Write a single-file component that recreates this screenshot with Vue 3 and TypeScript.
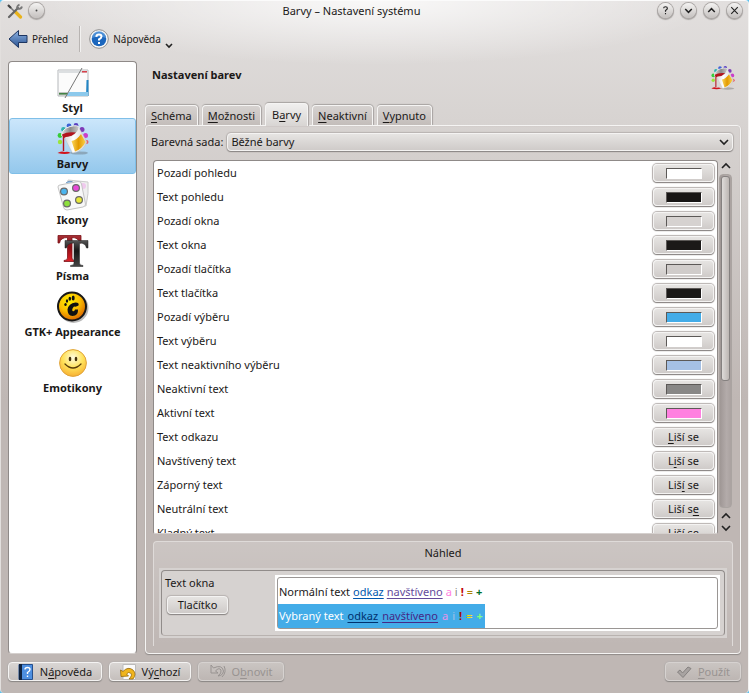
<script setup lang="ts">
import { ref } from 'vue'

interface Accel {
  label: string
  key: number
}

interface ColorRow {
  label: string
  color?: string
  key?: number
}

const modules = ['Styl', 'Barvy', 'Ikony', 'Písma', 'GTK+ Appearance', 'Emotikony']
const activeModule = ref('Barvy')

const tabs: Accel[] = [
  { label: 'Schéma', key: 0 },
  { label: 'Možnosti', key: 0 },
  { label: 'Barvy', key: 1 },
  { label: 'Neaktivní', key: 0 },
  { label: 'Vypnuto', key: 0 },
]
const activeTab = ref('Barvy')

const colorSet = ref('Běžné barvy')

const rows: ColorRow[] = [
  { label: 'Pozadí pohledu', color: '#ffffff' },
  { label: 'Text pohledu', color: '#181615' },
  { label: 'Pozadí okna', color: '#d6d2d0' },
  { label: 'Text okna', color: '#1b1918' },
  { label: 'Pozadí tlačítka', color: '#d0ccca' },
  { label: 'Text tlačítka', color: '#1b1918' },
  { label: 'Pozadí výběru', color: '#43ace8' },
  { label: 'Text výběru', color: '#ffffff' },
  { label: 'Text neaktivního výběru', color: '#a5c0e4' },
  { label: 'Neaktivní text', color: '#888786' },
  { label: 'Aktivní text', color: '#ff80e0' },
  { label: 'Text odkazu', key: 0 },
  { label: 'Navštívený text', key: 1 },
  { label: 'Záporný text', key: 3 },
  { label: 'Neutrální text', key: 6 },
  { label: 'Kladný text', key: 2 },
]
const varies = 'Liší se'

const samples = [
  { text: 'Normální text', kind: 'normal' },
  { text: 'Vybraný text', kind: 'chosen' },
]
</script>

<template>
  <div class="window">
    <svg class="defs" aria-hidden="true">
      <defs>
        <linearGradient id="metal" x1="0" x2="1">
          <stop offset="0" stop-color="#d4d4d4" />
          <stop offset="0.4" stop-color="#ffffff" />
          <stop offset="1" stop-color="#d0d0d0" />
        </linearGradient>
        <linearGradient id="rim" x1="0" x2="1">
          <stop offset="0" stop-color="#dddddd" />
          <stop offset="0.5" stop-color="#8a8a8a" />
          <stop offset="1" stop-color="#cccccc" />
        </linearGradient>
        <linearGradient id="gold" x1="0" x2="1">
          <stop offset="0" stop-color="#fbd75c" />
          <stop offset="0.5" stop-color="#e39a00" />
          <stop offset="1" stop-color="#fbd04a" />
        </linearGradient>
        <linearGradient id="blue" x1="0" y1="0" x2="0" y2="1">
          <stop offset="0" stop-color="#8fb4e4" />
          <stop offset="1" stop-color="#27508f" />
        </linearGradient>
        <linearGradient id="redT" x1="0" y1="0" x2="0" y2="1">
          <stop offset="0" stop-color="#a83036" />
          <stop offset="0.45" stop-color="#8a0c14" />
          <stop offset="1" stop-color="#e02028" />
        </linearGradient>
        <linearGradient id="darkT" x1="0" y1="0" x2="0" y2="1">
          <stop offset="0" stop-color="#555555" />
          <stop offset="0.4" stop-color="#161616" />
          <stop offset="1" stop-color="#444444" />
        </linearGradient>
        <radialGradient id="gtk" cx="0.4" cy="0.3" r="0.75">
          <stop offset="0" stop-color="#fff100" />
          <stop offset="0.5" stop-color="#fbc000" />
          <stop offset="1" stop-color="#d65a00" />
        </radialGradient>
        <radialGradient id="smile" cx="0.5" cy="0.3" r="0.75">
          <stop offset="0" stop-color="#fffbe0" />
          <stop offset="0.5" stop-color="#ffe25a" />
          <stop offset="1" stop-color="#f6a92c" />
        </radialGradient>
        <symbol id="paint" viewBox="0 0 32 32">
          <circle cx="3" cy="19" r="2.2" fill="#9be53a" />
          <circle cx="3" cy="12.5" r="2.4" fill="#35cc38" />
          <circle cx="6.5" cy="6.5" r="2.4" fill="#32b2ae" />
          <circle cx="12" cy="2.8" r="2.4" fill="#3d62d6" />
          <circle cx="19" cy="2.5" r="2.4" fill="#5940c0" />
          <circle cx="25" cy="6.5" r="2.5" fill="#7e3ab8" />
          <circle cx="28.5" cy="12.5" r="2.5" fill="#cb3fc9" />
          <circle cx="29.5" cy="19" r="2" fill="#ec5562" />
          <ellipse cx="22" cy="30" rx="9" ry="1.6" fill="#555" opacity="0.35" />
          <path d="M7 14 L21.500 4 L30 19 Q27 28 15.500 30 Z" fill="url(#metal)" stroke="#c0c0c0" stroke-width="0.5" />
          <path d="M14.500 18 Q20 17 24 11 L28.500 19 Q25 26 18 28.500 Z" fill="url(#gold)" />
          <path d="M4.500 12.500 Q5 6 13 3.500 Q21 1.500 22 4.500 Q22 9 14.500 13 Q6 16 4.500 12.500 Z" fill="url(#rim)" stroke="#f0f0f0" stroke-width="1" />
          <path d="M5 11.500 Q10 8.500 19 9.500 Q15 13.500 9 14 L7.200 15 V28 H5.800 V14 Z" fill="#b3141d" />
          <path d="M0.500 30 Q4 27.500 8 29 Q11 28 13.500 30 Q8 32 0.500 30 Z" fill="#d1141c" />
        </symbol>
      </defs>
    </svg>

    <header class="titlebar">
      <svg class="tools" viewBox="0 0 16 16" aria-hidden="true">
        <path d="M2 3 L13 14" stroke="#777" stroke-width="1.5" />
        <path d="M8.500 9 L13.500 14" stroke="#e9b31c" stroke-width="3.2" stroke-linecap="round" />
        <path d="M2 14 L11 5" stroke="#666" stroke-width="2.2" stroke-linecap="round" />
        <path d="M10 6 Q9.500 3 12.500 1.500 M11 6 Q14.500 6 15 3.500" stroke="#777" stroke-width="1.7" fill="none" />
        <path d="M1 2 L4 5" stroke="#444" stroke-width="2.2" />
      </svg>
      <button class="orb" aria-label="Na všech plochách">
        <svg viewBox="0 0 16 16"><circle cx="8" cy="8" r="1" fill="#444" /></svg>
      </button>
      <h1>Barvy – Nastavení systému</h1>
      <div class="orbs">
        <button class="orb" aria-label="Nápověda okna">
          <svg viewBox="0 0 16 16"><path class="thin" d="M6 5.500 Q6 4 8 4 Q10 4 10 5.700 Q10 7 8 8 V9.300 M8 10.700 V12" /></svg>
        </button>
        <button class="orb" aria-label="Minimalizovat">
          <svg viewBox="0 0 16 16"><path d="M4.500 6.500 L8 10 L11.500 6.500" /></svg>
        </button>
        <button class="orb" aria-label="Maximalizovat">
          <svg viewBox="0 0 16 16"><path d="M4.500 9.500 L8 6 L11.500 9.500" /></svg>
        </button>
        <button class="orb" aria-label="Zavřít">
          <svg viewBox="0 0 16 16"><path class="thin" d="M4.500 4.500 L11.500 11.500 M11.500 4.500 L4.500 11.500" /></svg>
        </button>
      </div>
    </header>

    <div class="toolbar">
      <button class="tool">
        <svg class="i20" viewBox="0 0 20 20" aria-hidden="true">
          <path d="M1 10 L10.500 1.500 V6.500 H19 V13.500 H10.500 V18.500 Z" fill="url(#blue)" stroke="#1d3561" stroke-linejoin="round" />
        </svg>
        Přehled
      </button>
      <span class="separator"></span>
      <button class="tool">
        <svg class="i20" viewBox="0 0 20 20" aria-hidden="true">
          <circle cx="10" cy="10" r="9.3" fill="#f8f8f8" stroke="#777" stroke-width="0.8" />
          <circle cx="10" cy="10" r="7.3" fill="#1b66bd" />
          <path d="M3 9 A7 7 0 0 1 17 9 Q10 6 3 9Z" fill="#6ba9e6" opacity="0.6" />
          <path d="M7.300 7.800 Q7.500 5.500 10 5.500 Q12.500 5.500 12.500 7.600 Q12.500 9 10 10.400 V11.600 M10 13 V15" fill="none" stroke="#fff" stroke-width="2" />
        </svg>
        Nápověda
        <svg class="drop" viewBox="0 0 8 6" aria-hidden="true"><path d="M1 1 L4 4 L7 1" /></svg>
      </button>
    </div>

    <main class="body">
      <nav class="sidebar">
        <button
          v-for="(name, i) in modules"
          :key="name"
          class="module"
          :class="{ active: name === activeModule }"
          @click="activeModule = name"
        >
          <svg v-if="i === 0" class="i32" viewBox="0 0 32 32" aria-hidden="true">
            <path d="M1 3 H31 V29 H1 Z" fill="#fbfbfb" stroke="#b5b8bb" />
            <path d="M1.500 3.500 H30.500 V6 H1.500 Z" fill="#dcdfe1" />
            <path d="M25 4 H30 V5.500 H25 Z" fill="#d8414b" />
            <path d="M29.500 13 H31.500 V29 H29 Z" fill="#2385c4" />
            <path d="M12 25 H31 V29 H9 Z" fill="#8cc9ec" />
            <path d="M2 25 H11 L9 28.500 H2 Z" fill="#c0c3c0" />
            <path d="M2 26 H10.500 V27.500 H2 Z" fill="#438345" />
            <path d="M25 1 L8 31" stroke="#777" />
          </svg>
          <svg v-else-if="i === 1" class="i32" aria-hidden="true"><use href="#paint" /></svg>
          <svg v-else-if="i === 2" class="i32" viewBox="0 0 32 32" aria-hidden="true">
            <path d="M11 1 L31 3 Q32 14 29 27 L9 25 Z" fill="#efefef" stroke="#ccc" />
            <path d="M9 4 Q13 0.500 17 4" fill="#9bc8ee" stroke="#7098c0" />
            <circle cx="26" cy="7" r="3" fill="#f0c9ee" />
            <path d="M1 8 Q1 6 3 6 L21 2.500 Q24 2 24.500 5 L28.500 25 Q29 27 26 28 L10 31 Q7 31 6.500 28 Z" fill="#f8f8f8" stroke="#c4c4c4" />
            <g stroke="#696969" stroke-width="1.2">
              <circle cx="7" cy="12.5" r="3.4" fill="#4cb5ef" />
              <circle cx="19" cy="9" r="3.4" fill="#e748d8" />
              <circle cx="10" cy="24.5" r="3.4" fill="#8de03c" />
              <circle cx="22" cy="21" r="3.4" fill="#e7e83a" />
            </g>
          </svg>
          <svg v-else-if="i === 3" class="i32" viewBox="0 0 32 32" aria-hidden="true">
            <path d="M1 0.500 H24 V8 H22.500 Q21.500 2.500 15 2.500 V23 Q15 25.500 18 25.500 V26.500 H7 V25.500 Q10.500 25.500 10.500 23 V2.500 Q3.500 2.500 2.500 8 H1 Z" fill="url(#redT)" stroke="#7c1218" stroke-width="0.8" />
            <path d="M8 5.500 H31 V13 H29.500 Q28.500 8 22.500 8 V28 Q22.500 30.500 26 30.500 V31.500 H13.500 V30.500 Q17 30.500 17 28 V8 Q10.500 8 9.500 13 H8 Z" fill="url(#darkT)" stroke="#222" stroke-width="0.5" />
          </svg>
          <svg v-else-if="i === 4" class="i32" viewBox="0 0 32 32" aria-hidden="true">
            <circle cx="16.5" cy="17" r="15" fill="#777" opacity="0.5" />
            <circle cx="15" cy="15.5" r="14" fill="url(#gtk)" stroke="#181818" stroke-width="2" />
            <ellipse cx="8.5" cy="13.5" rx="1.2" ry="1.6" fill="#111" />
            <ellipse cx="10" cy="10" rx="1.2" ry="1.8" fill="#111" />
            <ellipse cx="12.8" cy="7.8" rx="1.3" ry="2" fill="#111" />
            <ellipse cx="16.2" cy="7" rx="1.5" ry="2.5" fill="#111" />
            <path d="M18.500 11.500 Q22.500 11.500 21.500 14.500 Q19.500 16 17 15.500 Q14.500 18 15.500 20 Q17.500 21 18 18.500 H21 Q21.500 25 15.500 25 Q10.500 24.500 10.500 18.500 Q11.500 12.500 18.500 11.500 Z" fill="#111" />
          </svg>
          <svg v-else class="i32" viewBox="0 0 32 32" aria-hidden="true">
            <circle cx="16" cy="16" r="13.4" fill="url(#smile)" stroke="#e0a33a" />
            <ellipse cx="13" cy="12" rx="1.3" ry="2.2" fill="#45300c" />
            <ellipse cx="19" cy="12" rx="1.3" ry="2.2" fill="#45300c" />
            <path d="M8 17 Q16 25 24 17" fill="none" stroke="#5a3c0a" stroke-width="1.3" stroke-linecap="round" />
          </svg>
          <span>{{ name }}</span>
        </button>
      </nav>

      <section class="content">
        <div class="heading">
          <h2>Nastavení barev</h2>
          <svg class="i24" aria-hidden="true"><use href="#paint" /></svg>
        </div>

        <div class="tabs" role="tablist">
          <button
            v-for="t in tabs"
            :key="t.label"
            class="tab"
            role="tab"
            :aria-selected="t.label === activeTab"
            :class="{ active: t.label === activeTab }"
            @click="activeTab = t.label"
          ><span>{{ t.label.slice(0, t.key) }}<u>{{ t.label[t.key] }}</u>{{ t.label.slice(t.key + 1) }}</span></button>
        </div>

        <div class="panel">
          <div class="set">
            <label for="color-set">Barevná sada:</label>
            <div class="combo">
              <select id="color-set" v-model="colorSet">
                <option>Běžné barvy</option>
              </select>
              <svg viewBox="0 0 10 8" aria-hidden="true"><path d="M1 2 L5 6 L9 2" /></svg>
            </div>
          </div>

          <div class="listing">
            <ul class="colors">
              <li v-for="r in rows" :key="r.label">
                <span>{{ r.label }}</span>
                <button class="push swatch-button" :aria-label="r.label">
                  <i v-if="r.color" class="swatch" :style="{ background: r.color }"></i>
                  <span v-else>{{ varies.slice(0, r.key) }}<u>{{ varies[r.key ?? 0] }}</u>{{ varies.slice((r.key ?? 0) + 1) }}</span>
                </button>
              </li>
            </ul>
            <div class="scroll" aria-hidden="true">
              <svg viewBox="0 0 10 8"><path d="M1 6 L5 2 L9 6" /></svg>
              <div class="groove"><div class="thumb"></div></div>
              <svg viewBox="0 0 10 8"><path d="M1 6 L5 2 L9 6" /></svg>
              <svg viewBox="0 0 10 8"><path d="M1 2 L5 6 L9 2" /></svg>
            </div>
          </div>

          <section class="preview">
            <h3>Náhled</h3>
            <div class="sample">
              <div class="sample-inner">
                <div class="sample-left">
                  <span>Text okna</span>
                  <button class="push">Tlačítko</button>
                </div>
                <div class="view">
                  <div class="view-inner">
                    <p v-for="s in samples" :key="s.kind" :class="s.kind">
                      <span>{{ s.text }}</span>
                      <a href="#">odkaz</a>
                      <a href="#" class="visited">navštíveno</a>
                      <span class="act">a</span>
                      <span class="ina">i</span>
                      <b class="neg">!</b>
                      <span class="neu">=</span>
                      <b class="pos">+</b>
                    </p>
                  </div>
                </div>
              </div>
            </div>
          </section>
        </div>
      </section>
    </main>

    <footer class="actions">
      <button class="push action help">
        <svg class="i16" viewBox="0 0 16 16" aria-hidden="true">
          <path d="M1 0.500 H14.500 V15.500 H1 Z" fill="#4d8fe0" stroke="#254f8d" />
          <path d="M1 0 H4 V16 H1 Z" fill="#10233f" />
          <path d="M7 5.500 Q7 3.500 9.500 3.500 Q12 3.500 12 5.500 Q12 7 9.500 8.500 V10 M9.500 11.500 V13" fill="none" stroke="#fff" stroke-width="1.4" />
        </svg>
        <span>N<u>á</u>pověda</span>
      </button>
      <button class="push action defaults">
        <svg class="i16" viewBox="0 0 16 16" aria-hidden="true">
          <path d="M3 0.500 H15.500 V15.500 H3 Z" fill="#fafafa" stroke="#bbb" />
          <path d="M0.500 6 L3 7.500 Q8 2 13 6 Q17 10 13 15 H9 Q13 11 10.500 9 Q8.500 7.500 6.500 10 L8.500 12 L1 12.500 Z" fill="#f0b51d" stroke="#96680a" stroke-width="0.8" />
        </svg>
        <span>Vý<u>c</u>hozí</span>
      </button>
      <button class="push action reset" disabled>
        <svg class="i16" viewBox="0 0 16 16" aria-hidden="true">
          <path d="M1 1 V9 H8 L5.500 7 Q9 3 11 6 Q12 9 8 12 Q13 11.500 13.500 7 Q12 0 3.500 4 Z M14 2 Q17 8 12 13" fill="none" stroke="#989391" stroke-width="1" />
        </svg>
        <span>O<u>b</u>novit</span>
      </button>
      <button class="push action apply" disabled>
        <svg class="i16" viewBox="0 0 16 16" aria-hidden="true">
          <path d="M1.500 8 L4 6 L6.500 9 L12 3 L15 4.500 L7 13.500 Z" fill="#a8a3a1" stroke="#858180" stroke-linejoin="round" />
        </svg>
        <span><u>P</u>oužít</span>
      </button>
    </footer>
  </div>
</template>

<style>
body {
  margin: 0;
  background: #5cc0ee;
}
</style>

<style scoped>
* {
  box-sizing: border-box;
}
.window {
  height: 100vh;
  display: flex;
  flex-direction: column;
  border-top: 1px solid #fbfbfb;
  border-left: 1px solid #e2dfdd;
  border-right: 1px solid #f4f3f2;
  border-radius: 4px;
  font: 11px/16px "Noto Sans", "Open Sans", sans-serif;
  color: #1b1918;
  background:
    radial-gradient(ellipse 340px 64px at 50% 0, rgba(255, 255, 255, 0.8), rgba(255, 255, 255, 0)),
    linear-gradient(#e2dfde 0, #d7d3d1 120px, #bfb7b4 400px);
}
.defs {
  display: block;
  width: 0;
  height: 0;
}
button,
select {
  font: inherit;
  color: inherit;
  margin: 0;
  padding: 0;
  border: 0;
  background: none;
}
h1,
h2,
h3,
p,
ul {
  margin: 0;
  padding: 0;
  font: inherit;
}
svg {
  display: block;
  flex: none;
}
u {
  text-underline-offset: 2px;
}
.i16 {
  width: 16px;
  height: 16px;
}
.i20 {
  width: 20px;
  height: 20px;
}
.i24 {
  width: 24px;
  height: 24px;
}
.i32 {
  width: 32px;
  height: 32px;
}

.titlebar {
  display: grid;
  grid-template-columns: 16px 16px 1fr 84px;
  align-items: center;
  gap: 6px;
  height: 19px;
  padding: 0 6px;
  flex: none;
}
.tools {
  width: 16px;
  height: 16px;
}
.titlebar h1 {
  text-align: center;
}
.orbs {
  display: flex;
  gap: 8px;
  justify-content: flex-end;
}
.orb {
  width: 15px;
  height: 15px;
  border-radius: 50%;
  background: linear-gradient(#f4f3f2, #c4c0be);
  box-shadow: 0 0 0 1px #aca8a6, 0 1px 1px 1px #aaa6a4;
}
.orb svg {
  width: 15px;
  height: 15px;
}
.orb path,
.drop path,
.combo path,
.scroll path {
  fill: none;
  stroke: #222;
  stroke-width: 1.6;
}
.orb .thin {
  stroke-width: 1.2;
}

.toolbar {
  display: flex;
  align-items: center;
  height: 38px;
  padding: 0 7px;
  font-size: 10px;
  flex: none;
}
.tool {
  display: flex;
  align-items: center;
  gap: 4px;
}
.separator {
  width: 2px;
  height: 26px;
  margin: 0 8px 0 11px;
  background: linear-gradient(90deg, #b8b4b2 50%, #f2f1f0 50%);
}
.drop {
  width: 8px;
  height: 6px;
  margin-top: 14px;
}

.body {
  flex: 1;
  min-height: 0;
  display: flex;
  gap: 8px;
  padding: 3px 7px 0;
}
.sidebar {
  width: 129px;
  flex: none;
  border: 1px solid #8f8a88;
  border-bottom-color: #d5d0ce;
  border-radius: 4px;
  background: #fff;
}
.module {
  width: 100%;
  height: 56px;
  padding-top: 4px;
  display: flex;
  flex-direction: column;
  align-items: center;
  gap: 1px;
  border: 1px solid transparent;
  border-radius: 3px;
  font-weight: bold;
}
.module.active {
  border-color: #7fbfe8;
  background: linear-gradient(#cbe6fb, #94c8ec);
}

.content {
  flex: 1;
  min-width: 0;
  display: flex;
  flex-direction: column;
}
.heading {
  display: flex;
  justify-content: space-between;
  align-items: center;
  height: 34px;
  padding: 0 6px 0 7px;
  flex: none;
}
.heading h2 {
  font-weight: bold;
  padding-bottom: 6px;
}
.tabs {
  display: flex;
  align-items: flex-end;
  gap: 4px;
  height: 30px;
  flex: none;
}
.tab {
  height: 20px;
  padding: 0 5px;
  border: 1px solid #f5f4f3;
  border-bottom: 0;
  border-radius: 4px 4px 0 0;
  background: linear-gradient(#d6d2d0, #c3bdba);
  box-shadow: 0 -1px 1px #a8a4a2, 1px 0 1px #a8a4a2;
}
.tab.active {
  position: relative;
  height: 23px;
  padding: 0 6px;
  margin-bottom: -1px;
  background: linear-gradient(#f0efee, #d8d5d3);
}
.panel {
  flex: 1;
  min-height: 0;
  display: flex;
  flex-direction: column;
  padding: 6px 7px 7px;
  border: 1px solid #f5f4f3;
  border-radius: 4px;
  box-shadow: 0 1px 1px #8f8a88, inset 0 0 1px #b5b0ad;
}
.set {
  display: flex;
  align-items: center;
  gap: 4px;
  height: 20px;
  margin-left: -2px;
  flex: none;
}
.combo {
  position: relative;
  flex: 1;
}
.combo select {
  display: block;
  appearance: none;
  width: 100%;
  height: 18px;
  padding: 0 3px;
  line-height: 16px;
}
.combo select,
.push {
  border: 1px solid #f4f3f2;
  border-radius: 4px;
  background: linear-gradient(#e6e4e2, #cfcbc9);
  box-shadow: 0 1px 1px #8a8684, 0 0 1px 1px #b8b3b1;
}
.combo svg {
  position: absolute;
  right: 4px;
  top: 5px;
  width: 10px;
  height: 8px;
}
.listing {
  flex: 1 1 0;
  min-height: 0;
  display: flex;
  margin-top: 8px;
}
.colors {
  flex: 1;
  overflow: hidden;
  list-style: none;
  background: #fff;
  border: 1px solid #8f8a88;
  border-bottom-color: #d5d0ce;
  border-radius: 4px 4px 2px 2px;
}
.colors li {
  height: 24px;
  display: flex;
  align-items: center;
  justify-content: space-between;
  padding: 0 3px;
}
.push {
  height: 18px;
  line-height: 14px;
}
.swatch-button {
  width: 61px;
  display: flex;
  align-items: center;
  justify-content: center;
}
.swatch {
  width: 36px;
  height: 11px;
  border: 1px solid;
  border-color: #5c5957 #fff #fff #5c5957;
}
.scroll {
  width: 15px;
  display: flex;
  flex-direction: column;
  align-items: center;
}
.scroll svg {
  width: 10px;
  height: 8px;
  margin: 2px 0;
}
.groove {
  width: 13px;
  flex: 1;
  margin: 2px 0;
  padding: 1px;
  border: 1px solid #aaa4a1;
  border-radius: 4px;
  background: linear-gradient(90deg, #9f9795, #b3abaa 60%, #aaa2a0);
}
.thumb {
  height: 62%;
  border: 1px solid #858180;
  border-radius: 3px;
  background: linear-gradient(90deg, #dedbd9, #bcb6b3);
}

.preview {
  flex: none;
  margin-top: 7px;
  padding: 3px 5px 8px;
  border: 1px solid #dfdbd9;
  border-bottom: 0;
  border-radius: 4px 4px 0 0;
  background: linear-gradient(rgba(255, 255, 255, 0.2), rgba(255, 255, 255, 0));
}
.preview h3 {
  text-align: center;
  margin-bottom: 7px;
}
.sample {
  padding: 2px;
  background: #d6d2d0;
}
.sample-inner {
  display: flex;
  padding: 4px 4px 4px 3px;
  border: 1px solid #918c8a;
  border-bottom-color: #b9b3b0;
  border-radius: 4px;
}
.sample-left {
  width: 110px;
  flex: none;
  display: flex;
  flex-direction: column;
  align-items: flex-start;
  gap: 5px;
}
.sample-left .push {
  margin-left: 2px;
  width: 61px;
}
.view {
  flex: 1;
  padding: 2px;
  background: #fff;
}
.view-inner {
  padding-top: 2px;
  border: 1px solid #9a9694;
  border-radius: 3px;
}
.view p {
  display: flex;
  gap: 3px;
  width: max-content;
  height: 24px;
  line-height: 24px;
  padding: 0 2px 0 1px;
}
.view a {
  color: #0057ae;
  text-underline-offset: 2px;
}
.view a.visited {
  color: #644a9b;
}
.view .act {
  color: #ff80e0;
}
.view .ina {
  color: #888786;
}
.view .neg {
  color: #bf0303;
}
.view .neu {
  color: #b08000;
}
.view .pos {
  color: #006e28;
}
.view .chosen {
  gap: 4px;
  color: #fff;
  background: #43ace8;
}
.view .chosen a {
  color: #00316e;
}
.view .chosen a.visited {
  color: #452886;
}
.view .chosen .act {
  color: #e794e8;
}
.view .chosen .ina {
  color: #a5c0e4;
}
.view .chosen .neg {
  color: #9c0e0e;
}
.view .chosen .neu {
  color: #ffdd00;
}
.view .chosen .pos {
  color: #80ff80;
}

.actions {
  flex: none;
  display: flex;
  gap: 7px;
  height: 39px;
  padding: 8px 7px 0;
}
.action {
  display: flex;
  align-items: center;
  justify-content: center;
  gap: 6px;
  height: 19px;
  background: linear-gradient(#d9d6d4, #c5bfbc);
}
.help {
  width: 94px;
}
.defaults {
  width: 82px;
}
.reset {
  width: 86px;
}
.apply {
  width: 76px;
  margin-left: auto;
}
.action:disabled {
  color: #989391;
  border-color: #d6d2d0;
  background: linear-gradient(#cac5c2, #bdb6b3);
}
</style>
